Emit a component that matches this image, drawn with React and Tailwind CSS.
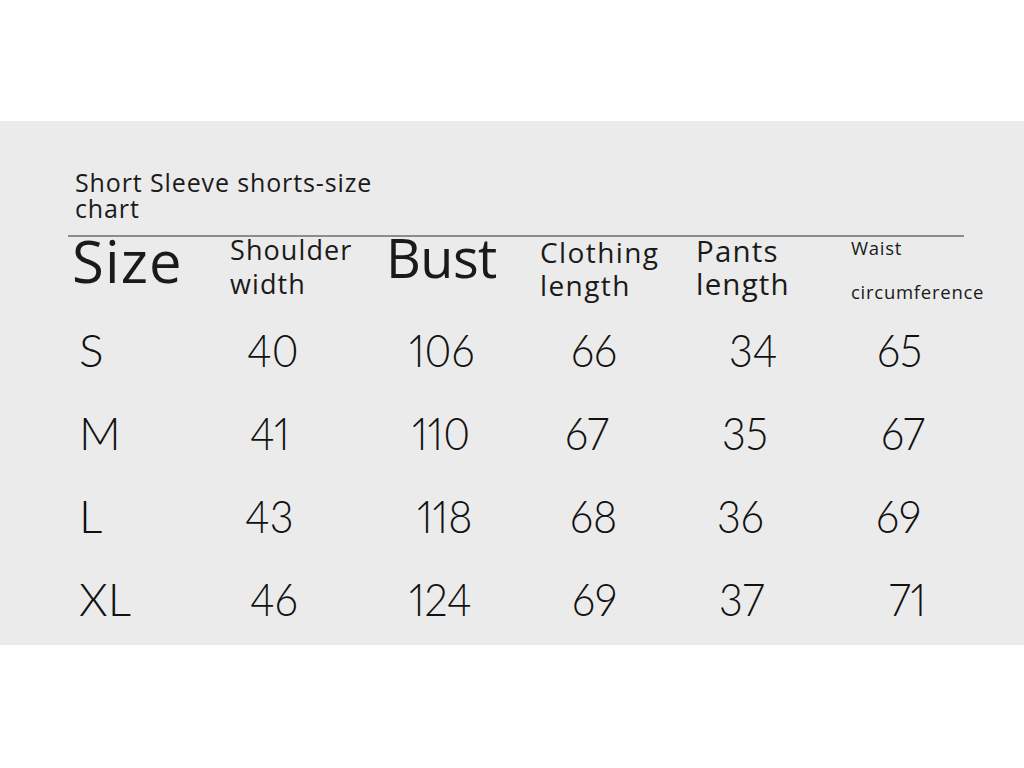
import React from 'react';

const rows = [
  { cells: [['S', 'pl-[7px]'], ['40', 'pl-[17px]'], ['106', 'pl-[23px]'], ['66', 'pl-[31px]'], ['34', 'pl-[33px]'], ['65', 'pl-[26px]']] },
  { cells: [['M', 'pl-[7px]'], ['41', 'pl-[20px]'], ['110', 'pl-[26px]'], ['67', 'pl-[25px]'], ['35', 'pl-[26px]'], ['67', 'pl-[30px]']] },
  { cells: [['L', 'pl-[7px]'], ['43', 'pl-[15px]'], ['118', 'pl-[31px]'], ['68', 'pl-[30px]'], ['36', 'pl-[21px]'], ['69', 'pl-[25px]']] },
  { cells: [['XL', 'pl-[7px]'], ['46', 'pl-[20px]'], ['124', 'pl-[23px]'], ['69', 'pl-[32px]'], ['37', 'pl-[23px]'], ['71', 'pl-[38px]']] },
];

const gridCols = 'grid grid-cols-[158px_156px_154px_156px_155px_1fr]';

const App = () => {
  return (
    <div className="w-[1024px] h-[768px] bg-white text-[#1a1a1a] font-['Open_Sans',sans-serif]">
      <div className="h-[121px]" />
      <div className="h-[524px] bg-[#ebebeb] pt-[49px]">
        <div className="pl-[75px] text-[25px] leading-[25.5px] tracking-[0.035em]">
          <div>Short Sleeve shorts-size</div>
          <div>chart</div>
        </div>
        <div className="ml-[68px] mt-[14px] w-[896px] h-[2px] bg-[#8c8c8c]" />

        <div className="ml-[72px]">
          <div className={`${gridCols} h-[71px] items-start`}>
            <div className="-mt-[5px] text-[58px] leading-[58px] tracking-[0.02em]">Size</div>
            <div className="-mt-[4px] text-[27px] leading-[34px] tracking-[0.04em]">
              Shoulder
              <br />
              width
            </div>
            <div className="-mt-[7px] text-[54px] leading-[54px] tracking-[-0.01em]">Bust</div>
            <div className="-mt-[1px] text-[28px] leading-[33px] tracking-[0.05em]">
              Clothing
              <br />
              length
            </div>
            <div className="-mt-[3px] text-[29.5px] leading-[33px] tracking-[0.04em]">
              Pants
              <br />
              length
            </div>
            <div className="-mt-[11px] text-[18.5px] leading-[44px] tracking-[0.04em]">
              Waist
              <br />
              circumference
            </div>
          </div>

          {rows.map((row, i) => (
            <div key={i} className={`${gridCols} h-[83px] font-['Lato',sans-serif] font-light proportional-nums text-[46px] leading-[83px] text-[#111]`}>
              {row.cells.map(([val, pad], j) => (
                <div key={j} className={pad}>
                  <span className={j === 0 ? 'inline-block' : 'inline-block origin-left scale-x-[0.9]'}>{val}</span>
                </div>
              ))}
            </div>
          ))}
        </div>
      </div>
    </div>
  );
};

export default App;
